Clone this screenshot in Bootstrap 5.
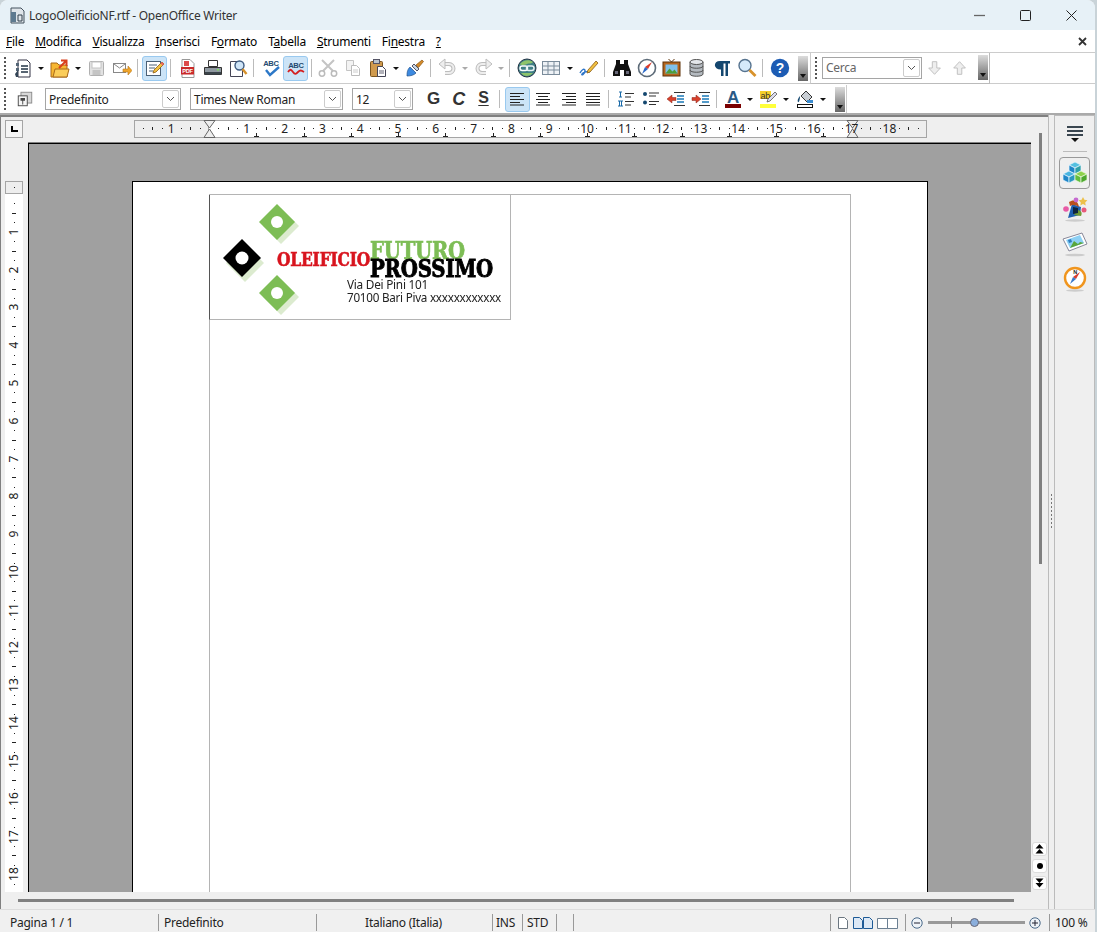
<!DOCTYPE html>
<html lang="it">
<head>
<meta charset="UTF-8">
<title>LogoOleificioNF.rtf - OpenOffice Writer</title>
<link href="https://cdn.jsdelivr.net/npm/bootstrap@5.3.0/dist/css/bootstrap.min.css" rel="stylesheet">
<style>
html, body { height: 100%; }
body { margin: 0; background: #c9d3d8; overflow: hidden; font-family: "Noto Sans", "Open Sans", sans-serif; font-size: 12px; letter-spacing: -0.25px; color: #111; }
.app-win { width: 1095px; height: 932px; background: #f0f0f0; border-top-left-radius: 8px; border-top-right-radius: 8px; overflow: hidden; }
.title-bar { height: 30px; background: #e7f1f7; color: #333; padding: 1px 1px 0 10px; }
.title-bar .win-btn { width: 46px; height: 28px; }
.menu-bar { height: 23px; background: #fff; border-bottom: 1px solid #ccc; padding: 1px 0 0 6px; }
.menu-bar a { color: #000; text-decoration: none; margin-right: 11px; }
.tool-row { height: 31px; background: #fff; border-bottom: 1px solid #ccc; }
.tool-row.second { border-bottom: 2px solid #aaa; padding-top: 1px; }
.grip { width: 2px; height: 22px; margin: 0 4px 0 4px; flex: none; background-image: linear-gradient(#555 50%, transparent 50%); background-size: 2px 4px; }
.second > .grip { margin-right: 6px; }
.tool { width: 25px; height: 25px; padding: 0; border: 1px solid transparent; border-radius: 3px; display: flex; align-items: center; justify-content: center; color: #222; flex: none; }
.tool.on { background: #cce4f7; border-color: #99c9ef; }
.arrow-btn { width: 12px; height: 25px; flex: none; position: relative; }
.arrow-btn.thin { width: 10px; }
.arrow-btn::after { content: ""; position: absolute; left: 50%; top: 11px; margin-left: -3px; border: 3px solid transparent; border-top: 3px solid #111; border-bottom: 0; }
.arrow-btn.off::after { border-top-color: #aaa; }
.sep { width: 8px; flex: none; height: 22px; position: relative; }
.sep.narrow { width: 7px; }
.sep.wide { width: 9px; }
.sep::after { content: ""; position: absolute; left: 3px; top: 2px; width: 1px; height: 18px; background: #bbb; }
.bar-end { width: 10px; height: 25px; flex: none; margin-left: 6px; background: linear-gradient(#dcdcdc, #666); position: relative; }
.bar-end::after { content: ""; position: absolute; left: 2px; bottom: 3px; border: 3px solid transparent; border-top: 4px solid #111; border-bottom: 0; }
.row-cap { width: 1px; height: 100%; background: #ccc; margin-left: 1px; flex: none; }
.find-box { border-left: 1px solid #ccc; border-right: 1px solid #bbb; border-bottom: 1px solid #bbb; height: 31px; margin-left: 2px; width: 180px; flex: none; }
.find-box .grip { margin: 0 5px 0 4px; }
.combo { height: 22px; border: 1px solid #a5a5a5; background: #fff; padding-left: 3px; color: #222; flex: none; }
.combo > span:first-child { padding-top: 1px; }
.combo .combo-btn { width: 17px; height: 18px; border: 1px solid #ccc; border-radius: 2px; margin: 1px; display: flex; align-items: center; justify-content: center; }
.combo-a { width: 136px; margin-left: 8px; }
.combo-b { width: 153px; margin-left: 9px; }
.combo-c { width: 61px; margin: 0 8px 0 9px; }
.combo-find { width: 100px; color: #666; }
.g-bold { font: 700 17px "Liberation Sans", sans-serif; color: #333; }
.c-ital { font: italic 700 18px "Liberation Sans", sans-serif; color: #333; }
.s-under { font: 700 16px "Liberation Sans", sans-serif; color: #333; text-decoration: underline; text-underline-offset: 2px; padding-bottom: 3px; }
.work-area { height: 794px; }
.left-pane { width: 1048px; }
.h-ruler-row { height: 28px; background: #efefef; border-top: 2px solid #808080; padding: 3px 0 0 5px; box-shadow: inset 1px 0 0 #808080; letter-spacing: 0; }
.corner-box { width: 18px; height: 18px; border: 1px solid #a5a5a5; background: #f5f5f5; position: relative; flex: none; }
.corner-box::after { content: ""; position: absolute; left: 5px; top: 5px; width: 7px; height: 6px; border-left: 2px solid #000; border-bottom: 2px solid #000; }
.h-ruler { position: relative; width: 793px; height: 18px; margin-left: 111px; background: #fff; border: 1px solid #a5a5a5; border-width: 1px 0; }
.rule-gray { position: absolute; top: -1px; height: 18px; background: #eee; border: 1px solid #a5a5a5; }
.rule-num { position: absolute; font-size: 12px; line-height: 14px; color: #222; }
.rule-dot { position: absolute; background: #222; }
.v-ruler { position: relative; width: 18px; height: 711px; margin: 38px 0 0 5px; background: #fff; letter-spacing: 0; }
.v-ruler .rule-gray { top: 0; left: 0; width: 18px; height: 13px; }
.v-rule-num { position: absolute; left: 0; width: 18px; text-align: center; line-height: 14px; transform: rotate(-90deg); color: #222; }
.v-pane { width: 28px; height: 749px; background: #efefef; flex: none; box-shadow: inset 1px 0 0 #808080; }
.doc-area { width: 1003px; height: 749px; background: #a0a0a0; border-left: 1px solid #000; border-top: 1px solid #000; box-shadow: 0 -1px 0 #808080; padding: 37px 0 0 103px; overflow: hidden; }
.page-sheet { width: 796px; height: 1123px; background: #fff; border: 1px solid #000; padding: 12px 76px 0; flex: none; }
.text-frame { height: 1000px; border: 1px solid #b4b4b4; }
.logo-pic { display: block; width: 302px; height: 125px; border-left: 1px solid #555; border-right: 1px solid #b4b4b4; border-bottom: 1px solid #b4b4b4; margin: 0 0 0 -1px; background: #fff; }
.logo-pic .blurred { filter: blur(0.45px); }
.v-scroll { width: 17px; background: #efefef; border-top: 2px solid #808080; position: relative; }
.v-thumb { width: 3px; height: 431px; background: #808080; margin: 16px 0 0 8px; }
.nav-btns { margin: auto 0 2px 1px; gap: 3px; }
.nav-btn { width: 15px; height: 14px; background: #fff; border: 1px solid #ddd; border-radius: 3px; display: flex; align-items: center; justify-content: center; }
.h-scroll { height: 17px; background: #efefef; padding-left: 18px; box-shadow: inset 1px 0 0 #808080; }
.h-thumb { width: 996px; height: 3px; background: #808080; }
.handle-col { width: 7px; background: #efefef; border-left: 1px solid #bbb; border-right: 1px solid #bbb; height: 794px; flex: none; }
.handle-dots { width: 1px; height: 36px; margin-left: 2px; background-image: linear-gradient(#777 50%, transparent 50%); background-size: 1px 4px; }
.side-bar { width: 40px; background: #efefef; border: 1px solid #bbb; border-bottom: 0; border-left: 0; padding-top: 8px; }
.side-rule { width: 24px; height: 1px; background: #bbb; margin: 7px 0 5px; }
.side-item { width: 31px; height: 32px; border: 1px solid transparent; border-radius: 4px; margin-bottom: 3px; display: flex; align-items: center; justify-content: center; flex: none; }
.side-item.on { border-color: #999; margin-bottom: 4px; }
.status-bar { height: 23px; background: #f0f0f0; border-top: 1px solid #ddd; padding-top: 4px; }
.status-cell { height: 17px; line-height: 17px; border-right: 1px solid #999; padding-left: 5px; flex: none; white-space: nowrap; color: #222; }
.zoom-track { width: 97px; height: 3px; background: #999; position: relative; margin: 0 4px 0 5px; flex: none; }
.zoom-track::before { content: ""; position: absolute; left: 23px; top: -4px; width: 1px; height: 11px; background: #888; }
.zoom-knob { position: absolute; left: 42px; top: -3px; width: 9px; height: 9px; border-radius: 50%; background: #8aaedc; border: 1px solid #667; }
</style>
</head>
<body>
<svg width="0" height="0" class="position-absolute">
<defs>
<symbol id="i-new" viewBox="0 0 20 20"><path d="M5 2h9l3 3v14H5z" fill="#fff" stroke="#334"/><path d="M3 5h3v3H3zM3 10h3v3H3z" fill="#567"/><path d="M8 8h7M8 11h7M8 14h7" stroke="#234" stroke-width="1.4"/><path d="M2 16l3-4v7H3z" fill="#345"/></symbol>
<symbol id="i-open" viewBox="0 0 20 20"><path d="M1 5h6l2 2h8v12H1z" fill="#f7b733" stroke="#a8681a"/><path d="M3 19l2-8h14l-2 8z" fill="#fbcd5a" stroke="#a8681a"/><path d="M9 10l7-7M11 2.500h5.500V8" fill="none" stroke="#d9401c" stroke-width="2"/></symbol>
<symbol id="i-save" viewBox="0 0 20 20"><rect x="2.500" y="3.500" width="14" height="14" rx="1" fill="#e2e2e2" stroke="#b0b0b0"/><rect x="5" y="4" width="9" height="6" fill="#fff" stroke="#c4c4c4"/><rect x="5.500" y="12" width="8" height="5" fill="#c4c4c4"/></symbol>
<symbol id="i-mail" viewBox="0 0 20 20"><rect x="1.500" y="5.500" width="12" height="9" fill="#fff" stroke="#888"/><path d="M2 6l5.500 4L13 6" fill="none" stroke="#888"/><path d="M11 11h5V8l4 4.500-4 4.500v-3h-5z" fill="#f0a52b" stroke="#b9771a" stroke-width=".6"/></symbol>
<symbol id="i-edit" viewBox="0 0 20 20"><rect x="1.500" y="3.500" width="14" height="14" fill="#fff" stroke="#4a6076"/><path d="M4 7h8M4 10h6M4 13h4" stroke="#4a6076"/><path d="M8 15l1-3 8-8 2 2-8 8z" fill="#f4c23f" stroke="#8c5b14" stroke-width=".8"/><path d="M15.500 5.500l2 2 1.500-1.500-2-2z" fill="#e66"/></symbol>
<symbol id="i-pdf" viewBox="0 0 20 20"><path d="M4 1.500h8l4 4v14H4z" fill="#fff" stroke="#999"/><rect x="3" y="9" width="13" height="7.500" fill="#c92a2a"/><path d="M6 3h5v5H6z" fill="#dd4a4a"/><text x="9.500" y="15" font-family="Liberation Sans" font-size="5.600" font-weight="700" fill="#fff" text-anchor="middle">PDF</text></symbol>
<symbol id="i-print" viewBox="0 0 20 20"><path d="M5.500 2.500h9v6h-9z" fill="#fff" stroke="#333"/><path d="M1.500 9.500h17v7h-17z" fill="#8f98a0" stroke="#333"/><path d="M2 14h16v2.500H2z" fill="#3a434a"/><path d="M14 11h2v1.500h-2z" fill="#7fe05f"/></symbol>
<symbol id="i-prev" viewBox="0 0 20 20"><path d="M2.500 3.500h9l3 3v12h-12z" fill="#fff" stroke="#445"/><circle cx="11.500" cy="7.500" r="4.500" fill="#cfe5f8" stroke="#3d5a80" stroke-width="1.400"/><path d="M14.500 11l4 5" stroke="#d8922b" stroke-width="2.400"/></symbol>
<symbol id="i-spell" viewBox="0 0 20 20"><text x="10" y="8" font-family="Liberation Sans" font-size="7.600" font-weight="700" fill="#244a70" text-anchor="middle">ABC</text><path d="M5 12l4 5 9-8" fill="none" stroke="#2d78c8" stroke-width="2.400"/></symbol>
<symbol id="i-auto" viewBox="0 0 20 20"><text x="10" y="10" font-family="Liberation Sans" font-size="7.600" font-weight="700" fill="#244a70" text-anchor="middle">ABC</text><path d="M2 14c2-3 3-3 5 0s3 2 5 0 3-2 6 0" fill="none" stroke="#d42020" stroke-width="1.800"/></symbol>
<symbol id="i-cut" viewBox="0 0 20 20"><path d="M4 2l11 11M16 2L5 13" stroke="#c4c4c4" stroke-width="2"/><circle cx="4" cy="15.500" r="2.700" fill="none" stroke="#bbb" stroke-width="1.500"/><circle cx="16" cy="15.500" r="2.700" fill="none" stroke="#bbb" stroke-width="1.500"/></symbol>
<symbol id="i-copy" viewBox="0 0 20 20"><path d="M3.500 2.500h7v10h-7z" fill="#f3f3f3" stroke="#c4c4c4"/><path d="M8.500 7.500h5l3 3v7h-8z" fill="#fff" stroke="#bbb"/><path d="M10 12h5M10 14h5" stroke="#ccc"/></symbol>
<symbol id="i-paste" viewBox="0 0 20 20"><rect x="2.500" y="3.500" width="12" height="15" rx="1" fill="#cf9a4e" stroke="#7a5520"/><rect x="5.500" y="1.500" width="6" height="4" fill="#b9c3cc" stroke="#556"/><path d="M9.500 8.500h5l3 3v7h-8z" fill="#fff" stroke="#445"/><path d="M11 13h5M11 15h5" stroke="#667"/></symbol>
<symbol id="i-brush" viewBox="0 0 20 20"><path d="M2 18c0-5 1-7 3-9l6 6c-2 2-5 3-9 3z" fill="#3d8ae0" stroke="#1d4f8a" stroke-width=".7"/><path d="M7 8l2-2 5 5-2 2z" fill="#c9d6e2" stroke="#556"/><path d="M11 7l6-5 1.500 1.500-5 6z" fill="#d38a2a" stroke="#8a5512" stroke-width=".7"/></symbol>
<symbol id="i-undo" viewBox="0 0 20 20"><path d="M6 6h6a4.500 4.500 0 0 1 0 9H8" fill="none" stroke="#bdbdbd" stroke-width="4"/><path d="M6 6h6a4.500 4.500 0 0 1 0 9H8" fill="none" stroke="#eee" stroke-width="2"/><path d="M8 1v10L2 6z" fill="#eee" stroke="#bdbdbd"/></symbol>
<symbol id="i-redo" viewBox="0 0 20 20"><path d="M14 6H8a4.500 4.500 0 0 0 0 9h4" fill="none" stroke="#bdbdbd" stroke-width="4"/><path d="M14 6H8a4.500 4.500 0 0 0 0 9h4" fill="none" stroke="#eee" stroke-width="2"/><path d="M12 1v10l6-5z" fill="#eee" stroke="#bdbdbd"/></symbol>
<symbol id="i-globe" viewBox="0 0 20 20"><circle cx="10" cy="10" r="9" fill="#3f7f86" stroke="#234"/><path d="M3 6c3-4 9-5 13-2-1 2-4 1-6 2S4 8 3 6zM4 15c3 4 8 4 12 0z" fill="#8ec46a"/><rect x="3" y="8" width="7.500" height="4.500" rx="2.200" fill="none" stroke="#fff" stroke-width="1.500"/><rect x="9.500" y="8" width="7.500" height="4.500" rx="2.200" fill="none" stroke="#e8f2f5" stroke-width="1.500"/></symbol>
<symbol id="i-table" viewBox="0 0 20 20"><rect x=".5" y="3.500" width="17" height="13" fill="#eef2f6" stroke="#7a8b9a"/><path d="M6 3.500v13M12 3.500v13M.5 8h17M.5 12h17" stroke="#7a8b9a"/></symbol>
<symbol id="i-draw" viewBox="0 0 20 20"><path d="M1 15c2-4 5-5 5-2s-4 5-3 3 6-3 8-2" fill="none" stroke="#2f76c9" stroke-width="1.500"/><path d="M9 12L17 3l2 2-8 9-3 1z" fill="#f1c040" stroke="#8a5b14" stroke-width=".8"/></symbol>
<symbol id="i-binoc" viewBox="0 0 20 20"><path d="M4 2h4v4h4V2h4v4l3 8v4h-7v-6H8v6H1v-4l3-8z" fill="#111"/><path d="M3 13h3v3H3zM14 13h3v3h-3z" fill="#667"/></symbol>
<symbol id="i-comp" viewBox="0 0 20 20"><circle cx="10" cy="10" r="8.500" fill="#fff" stroke="#5d6b78" stroke-width="1.600"/><path d="M15 4l-4 7-3-2z" fill="#d93a2b"/><path d="M5 16l3-7 3 2z" fill="#2a68c8"/></symbol>
<symbol id="i-gal" viewBox="0 0 20 20"><rect x="1" y="4" width="17" height="14" fill="#b5651d" stroke="#5e3209"/><rect x="3.500" y="6.500" width="12" height="9" fill="#7fc0ea"/><path d="M3.500 15.500l4-5 3 3 2-2 3 4z" fill="#4c9e3c"/><path d="M9.500 4l-3-3M9.500 4l3-3" stroke="#5e3209"/></symbol>
<symbol id="i-db" viewBox="0 0 20 20"><path d="M3 4v12c0 3 13 3 13 0V4z" fill="#b4bac0" stroke="#555"/><ellipse cx="9.500" cy="4" rx="6.500" ry="2.500" fill="#e3e6ea" stroke="#555"/><path d="M3 8c0 3 13 3 13 0M3 12c0 3 13 3 13 0" fill="none" stroke="#555"/></symbol>
<symbol id="i-pil" viewBox="0 0 20 20"><path d="M8 3h10v2.500h-2V18h-2.500V5.500h-2V18H9v-6.500c-8 0-8-8.500-1-8.500z" fill="#14476f"/></symbol>
<symbol id="i-find" viewBox="0 0 20 20"><circle cx="8" cy="7.500" r="6" fill="#d5e9fa" stroke="#56738f" stroke-width="1.400"/><path d="M12.500 12l6 6" stroke="#d8922b" stroke-width="2.800"/></symbol>
<symbol id="i-help" viewBox="0 0 20 20"><circle cx="10" cy="10" r="9.200" fill="#1d5cb4"/><text x="10" y="15" font-family="Liberation Sans" font-size="14" font-weight="700" fill="#fff" text-anchor="middle">?</text></symbol>
<symbol id="i-down" viewBox="0 0 20 20"><path d="M7 3h5v7h4l-6.500 7L3 10h4z" fill="#eee" stroke="#bbb"/></symbol>
<symbol id="i-up" viewBox="0 0 20 20"><path d="M7 17h5v-7h4L9.500 3 3 10h4z" fill="#eee" stroke="#bbb"/></symbol>
<symbol id="i-styles" viewBox="0 0 20 20"><rect x="5.500" y="2.500" width="12" height="12" fill="#d8d8d8" stroke="#888"/><rect x="2.500" y="6.500" width="10" height="11" fill="#f4f4f4" stroke="#444"/><path d="M5 9h5v3H8v4H7v-4H5z" fill="#444"/></symbol>
<symbol id="i-left" viewBox="0 0 20 20"><path d="M2 4.500h14M2 7.500h10M2 10.500h14M2 13.500h10M2 16h14" stroke="#222"/></symbol>
<symbol id="i-center" viewBox="0 0 20 20"><path d="M3 4.500h14M5 7.500h10M3 10.500h14M5 13.500h10M3 16h14" stroke="#222"/></symbol>
<symbol id="i-right" viewBox="0 0 20 20"><path d="M4 4.500h14M8 7.500h10M4 10.500h14M8 13.500h10M4 16h14" stroke="#222"/></symbol>
<symbol id="i-just" viewBox="0 0 20 20"><path d="M3 4.500h14M3 7.500h14M3 10.500h14M3 13.500h14M3 16h14" stroke="#222"/></symbol>
<symbol id="i-num" viewBox="0 0 20 20"><path d="M3 3h3M4.500 3v5M3 8h3M2 12h5M3.500 12v5M5.500 12v5M2 17h5" stroke="#1b6aa8"/><path d="M9 4.500h9M9 8h6M9 12.500h9M9 16h6" stroke="#333" stroke-width="1.200"/></symbol>
<symbol id="i-bul" viewBox="0 0 20 20"><circle cx="4" cy="5" r="2" fill="#14476f"/><circle cx="4" cy="13.500" r="2" fill="#14476f"/><path d="M8 4h10M8 7h7M8 12.500h10M8 15.500h7" stroke="#333" stroke-width="1.200"/></symbol>
<symbol id="i-indl" viewBox="0 0 20 20"><path d="M1 10l5-4v2.500h4v3H6V14z" fill="#d8402c" stroke="#8a2216" stroke-width=".5"/><path d="M11 7h7M11 10h7M11 13h7" stroke="#1b79b8" stroke-width="1.400"/><path d="M8 3.500h11M8 16.500h11" stroke="#333"/></symbol>
<symbol id="i-indr" viewBox="0 0 20 20"><path d="M10 10L5 6v2.500H1v3h4V14z" fill="#d8402c" stroke="#8a2216" stroke-width=".5"/><path d="M11 7h7M11 10h7M11 13h7" stroke="#1b79b8" stroke-width="1.400"/><path d="M8 3.500h11M8 16.500h11" stroke="#333"/></symbol>
<symbol id="i-color" viewBox="0 0 20 20"><text x="10" y="14" font-family="Liberation Sans" font-size="17" font-weight="700" fill="#2a5a86" text-anchor="middle">A</text><rect x="2" y="15" width="16" height="4" fill="#7a0000"/></symbol>
<symbol id="i-hilite" viewBox="0 0 20 20"><rect x="2" y="2" width="11" height="8" fill="#f4d02a"/><text x="2.500" y="10" font-family="Liberation Sans" font-size="9" fill="#333">ab</text><path d="M9 13l1-3 7-7 2 2-7 7z" fill="#dde" stroke="#555" stroke-width=".8"/><rect x="2" y="15" width="16" height="4" fill="#ffff3a"/></symbol>
<symbol id="i-bg" viewBox="0 0 20 20"><path d="M6 7l5-5 6 6-5 5z" fill="#c9ced4" stroke="#333"/><path d="M5 7c-2 2-3 5-2 6s2-3 2-6z" fill="#14476f"/><path d="M12 11h6v3h-6z" fill="#3a8cd0"/><rect x="2.500" y="15.500" width="15" height="3" fill="#fff" stroke="#111"/></symbol>
<symbol id="i-cube" viewBox="0 0 26 26"><path d="M13 2l6 3-6 3-6-3z" fill="#55c0e0" stroke="#eaf6ff" stroke-width=".7"/><path d="M7 5l6 3v6l-6-3z" fill="#1f86c8" stroke="#eaf6ff" stroke-width=".7"/><path d="M19 5l-6 3v6l6-3z" fill="#2fa0a8" stroke="#eaf6ff" stroke-width=".7"/><path d="M7 11l6 3-6 3-6-3z" fill="#48b4e0" stroke="#eaf6ff" stroke-width=".7"/><path d="M1 14l6 3v6l-6-3z" fill="#1f86c8" stroke="#eaf6ff" stroke-width=".7"/><path d="M13 14l-6 3v6l6-3z" fill="#2a98c0" stroke="#eaf6ff" stroke-width=".7"/><path d="M19 11l6 3-6 3-6-3z" fill="#8ed24c" stroke="#f0fbe6" stroke-width=".7"/><path d="M13 14l6 3v6l-6-3z" fill="#63bd3d" stroke="#f0fbe6" stroke-width=".7"/><path d="M25 14l-6 3v6l6-3z" fill="#4da82e" stroke="#f0fbe6" stroke-width=".7"/></symbol>
<symbol id="i-shapes" viewBox="0 0 26 26"><path d="M10 8l9 3-1 8-12 3z" fill="#1d5fb0"/><path d="M7 6c4-3 9-2 10 5-3-2-6-3-9-1z" fill="#b8501f"/><path d="M15 14c3 0 6 2 4 6l-7-1z" fill="#6f9a34"/><path d="M11 11l5 1v5l-5 1z" fill="#0e2440"/><circle cx="14" cy="4" r="2.400" fill="#c66ad0"/><path d="M21 1l1.400 2.800 3 .5-2.200 2.100.5 3-2.700-1.400-2.700 1.400.5-3-2.200-2.100 3-.5z" fill="#ecc04a"/><circle cx="4" cy="13" r="2.800" fill="#e85aa5"/><circle cx="22" cy="14" r="2.500" fill="#e85a7a"/><ellipse cx="13" cy="24.500" rx="10" ry="1.200" fill="#ccc"/></symbol>
<symbol id="i-pics" viewBox="0 0 26 26"><path d="M1 8l19-6 5 11-18 7z" fill="#fff" stroke="#889"/><path d="M4 9l14-5 4 8-14 5z" fill="#8dd0f4"/><path d="M8 17l4-7 4 3 2-2 4 1z" fill="#5aa63c"/><path d="M6 9l3-1 1 3-3 1z" fill="#2c7cc0"/><ellipse cx="13" cy="24" rx="10" ry="1.300" fill="#ccc"/></symbol>
<symbol id="i-nav" viewBox="0 0 26 26"><circle cx="13" cy="12" r="10" fill="#fff" stroke="#f0951e" stroke-width="2.400"/><path d="M18 6l-4 7-3-2z" fill="#d93a2b"/><path d="M8 18l3-7 3 2z" fill="#3a78c8"/><text x="13" y="7.500" font-family="Liberation Sans" font-size="5.500" font-weight="700" fill="#222" text-anchor="middle">N</text><ellipse cx="13" cy="24.500" rx="9" ry="1.200" fill="#ccc"/></symbol>
</defs>
</svg>

<div class="app-win d-flex flex-column">
  <div class="title-bar d-flex align-items-center">
    <svg width="15" height="17" viewBox="0 0 15 17" class="me-1"><path d="M1 1h10l3 3v12H1z" fill="#dfe5ea" stroke="#44525e"/><rect x="1" y="5" width="5" height="10" fill="#5e7a90"/><path d="M8 8h4v6H8z" fill="none" stroke="#33414d"/></svg>
    <span class="flex-grow-1">LogoOleificioNF.rtf - OpenOffice Writer</span>
    <div class="win-btn d-flex align-items-center justify-content-center"><svg width="11" height="11"><path d="M0 5.500h11" stroke="#666" stroke-width="1.300"/></svg></div>
    <div class="win-btn d-flex align-items-center justify-content-center"><svg width="11" height="11"><rect x=".5" y=".5" width="10" height="10" rx="1" fill="none" stroke="#222"/></svg></div>
    <div class="win-btn d-flex align-items-center justify-content-center"><svg width="11" height="11"><path d="M.5.500l10 10M10.500.500l-10 10" stroke="#222"/></svg></div>
  </div>

  <div class="menu-bar d-flex align-items-center">
    <a href="#"><u>F</u>ile</a><a href="#"><u>M</u>odifica</a><a href="#"><u>V</u>isualizza</a><a href="#"><u>I</u>nserisci</a><a href="#">F<u>o</u>rmato</a><a href="#">T<u>a</u>bella</a><a href="#"><u>S</u>trumenti</a><a href="#">Fi<u>n</u>estra</a><a href="#"><u>?</u></a>
    <svg width="9" height="9" class="ms-auto" style="margin-right:8px"><path d="M1 1l7 7M8 1L1 8" stroke="#333" stroke-width="1.800"/></svg>
  </div>

  <div class="tool-row d-flex align-items-center">
    <span class="grip"></span>
    <span class="tool"><svg width="20" height="20"><use href="#i-new"/></svg></span><span class="arrow-btn"></span>
    <span class="tool"><svg width="20" height="20"><use href="#i-open"/></svg></span><span class="arrow-btn"></span>
    <span class="tool"><svg width="20" height="20"><use href="#i-save"/></svg></span>
    <span class="tool"><svg width="20" height="20"><use href="#i-mail"/></svg></span>
    <span class="sep"></span>
    <span class="tool on"><svg width="20" height="20"><use href="#i-edit"/></svg></span>
    <span class="sep"></span>
    <span class="tool"><svg width="20" height="20"><use href="#i-pdf"/></svg></span>
    <span class="tool"><svg width="20" height="20"><use href="#i-print"/></svg></span>
    <span class="tool"><svg width="20" height="20"><use href="#i-prev"/></svg></span>
    <span class="sep"></span>
    <span class="tool"><svg width="20" height="20"><use href="#i-spell"/></svg></span>
    <span class="tool on"><svg width="20" height="20"><use href="#i-auto"/></svg></span>
    <span class="sep narrow"></span>
    <span class="tool"><svg width="20" height="20"><use href="#i-cut"/></svg></span>
    <span class="tool"><svg width="20" height="20"><use href="#i-copy"/></svg></span>
    <span class="tool"><svg width="20" height="20"><use href="#i-paste"/></svg></span><span class="arrow-btn"></span>
    <span class="tool"><svg width="20" height="20"><use href="#i-brush"/></svg></span>
    <span class="sep narrow"></span>
    <span class="tool"><svg width="20" height="20"><use href="#i-undo"/></svg></span><span class="arrow-btn off"></span>
    <span class="tool"><svg width="20" height="20"><use href="#i-redo"/></svg></span><span class="arrow-btn thin off"></span>
    <span class="sep"></span>
    <span class="tool"><svg width="20" height="20"><use href="#i-globe"/></svg></span>
    <span class="tool"><svg width="20" height="20"><use href="#i-table"/></svg></span><span class="arrow-btn"></span>
    <span class="tool"><svg width="20" height="20"><use href="#i-draw"/></svg></span>
    <span class="sep"></span>
    <span class="tool"><svg width="20" height="20"><use href="#i-binoc"/></svg></span>
    <span class="tool"><svg width="20" height="20"><use href="#i-comp"/></svg></span>
    <span class="tool"><svg width="20" height="20"><use href="#i-gal"/></svg></span>
    <span class="tool"><svg width="20" height="20"><use href="#i-db"/></svg></span>
    <span class="tool"><svg width="20" height="20"><use href="#i-pil"/></svg></span>
    <span class="tool"><svg width="20" height="20"><use href="#i-find"/></svg></span>
    <span class="sep"></span>
    <span class="tool"><svg width="20" height="20"><use href="#i-help"/></svg></span>
    <span class="bar-end"></span>
    <div class="find-box d-flex align-items-center">
      <span class="grip"></span>
      <div class="combo combo-find d-flex align-items-center justify-content-between"><span>Cerca</span><span class="combo-btn"><svg width="9" height="6"><path d="M1 1l3.500 3.500L8 1" fill="none" stroke="#555"/></svg></span></div>
      <span class="tool"><svg width="18" height="18"><use href="#i-down"/></svg></span>
      <span class="tool"><svg width="18" height="18"><use href="#i-up"/></svg></span>
      <span class="bar-end"></span>
    </div>
  </div>

  <div class="tool-row second d-flex align-items-center">
    <span class="grip"></span>
    <span class="tool"><svg width="18" height="18"><use href="#i-styles"/></svg></span>
    <div class="combo combo-a d-flex align-items-center justify-content-between"><span>Predefinito</span><span class="combo-btn"><svg width="9" height="6"><path d="M1 1l3.500 3.500L8 1" fill="none" stroke="#555"/></svg></span></div>
    <div class="combo combo-b d-flex align-items-center justify-content-between"><span>Times New Roman</span><span class="combo-btn"><svg width="9" height="6"><path d="M1 1l3.500 3.500L8 1" fill="none" stroke="#555"/></svg></span></div>
    <div class="combo combo-c d-flex align-items-center justify-content-between"><span>12</span><span class="combo-btn"><svg width="9" height="6"><path d="M1 1l3.500 3.500L8 1" fill="none" stroke="#555"/></svg></span></div>
    <span class="tool g-bold">G</span>
    <span class="tool c-ital">C</span>
    <span class="tool s-under">S</span>
    <span class="sep wide"></span>
    <span class="tool on"><svg width="20" height="20"><use href="#i-left"/></svg></span>
    <span class="tool"><svg width="20" height="20"><use href="#i-center"/></svg></span>
    <span class="tool"><svg width="20" height="20"><use href="#i-right"/></svg></span>
    <span class="tool"><svg width="20" height="20"><use href="#i-just"/></svg></span>
    <span class="sep"></span>
    <span class="tool"><svg width="20" height="20"><use href="#i-num"/></svg></span>
    <span class="tool"><svg width="20" height="20"><use href="#i-bul"/></svg></span>
    <span class="tool"><svg width="20" height="20"><use href="#i-indl"/></svg></span>
    <span class="tool"><svg width="20" height="20"><use href="#i-indr"/></svg></span>
    <span class="sep narrow"></span>
    <span class="tool"><svg width="20" height="20"><use href="#i-color"/></svg></span><span class="arrow-btn thin"></span>
    <span class="tool"><svg width="20" height="20"><use href="#i-hilite"/></svg></span><span class="arrow-btn"></span>
    <span class="tool"><svg width="20" height="20"><use href="#i-bg"/></svg></span><span class="arrow-btn"></span>
    <span class="bar-end"></span>
    <span class="row-cap"></span>
  </div>

  <div class="work-area d-flex">
    <div class="left-pane d-flex flex-column">
      <div class="d-flex">
        <div class="d-flex flex-column" style="width:1031px">
          <div class="h-ruler-row d-flex"><span class="corner-box"></span><div class="h-ruler" id="hRuler"></div></div>
          <div class="d-flex">
            <div class="v-pane"><div class="v-ruler" id="vRuler"></div></div>
            <div class="doc-area">
              <div class="page-sheet">
                <div class="text-frame">
                  <svg class="logo-pic" viewBox="0 0 300 124">
                    <g class="blurred" transform="translate(-210 -195)">
                      <g fill="#dcebcf"><path d="M281 208l18 18-18 18-18-18z"/><path d="M245 244l19 19-19 19-19-19z"/><path d="M281 279l18 18-18 18-18-18z"/></g>
                      <path d="M277 204l18 18-18 18-18-18z" fill="#7dbd55"/>
                      <path d="M242 239l19 19-19 19-19-19z" fill="#000"/>
                      <path d="M277 275l18 18-18 18-18-18z" fill="#7dbd55"/>
                      <circle cx="277" cy="222" r="6" fill="#fff"/><circle cx="242" cy="258" r="6.500" fill="#fff"/><circle cx="277" cy="293" r="6" fill="#fff"/>
                      <text x="370" y="259" font-family="DejaVu Serif" font-weight="700" font-size="24" fill="#7dbd55" stroke="#7dbd55" stroke-width=".7" textLength="95" lengthAdjust="spacingAndGlyphs">FUTURO</text>
                      <text x="277" y="266" font-family="DejaVu Serif" font-weight="700" font-size="18" fill="#d8141e" stroke="#d8141e" stroke-width=".6" textLength="93" lengthAdjust="spacingAndGlyphs">OLEIFICIO</text>
                      <text x="370" y="277" font-family="DejaVu Serif" font-weight="700" font-size="24" fill="#000" stroke="#000" stroke-width=".9" textLength="123" lengthAdjust="spacingAndGlyphs">PROSSIMO</text>
                      <text x="347" y="289" font-family="Noto Sans" font-size="12" fill="#222" textLength="81" lengthAdjust="spacingAndGlyphs">Via Dei Pini 101</text>
                      <text x="347" y="302" font-family="Noto Sans" font-size="12" fill="#222" textLength="154" lengthAdjust="spacingAndGlyphs">70100 Bari Piva xxxxxxxxxxxx</text>
                    </g>
                  </svg>
                </div>
              </div>
            </div>
          </div>
        </div>
        <div class="v-scroll d-flex flex-column">
          <div class="v-thumb"></div>
          <div class="nav-btns d-flex flex-column">
            <span class="nav-btn"><svg width="9" height="10"><path d="M4.500 0l4 4.500H.500zM4.500 5l4 4.500H.500z" fill="#000"/></svg></span>
            <span class="nav-btn"><svg width="6" height="6"><circle cx="3" cy="3" r="3" fill="#000"/></svg></span>
            <span class="nav-btn"><svg width="9" height="10"><path d="M.500.500h8L4.500 5zM.500 5h8l-4 4.500z" fill="#000"/></svg></span>
          </div>
        </div>
      </div>
      <div class="h-scroll d-flex align-items-center"><div class="h-thumb"></div></div>
    </div>
    <div class="handle-col d-flex align-items-center"><div class="handle-dots"></div></div>
    <div class="side-bar d-flex flex-column align-items-center flex-grow-1">
      <svg width="20" height="20" viewBox="0 0 20 20"><path d="M2 3h16M2 7h16M2 11h16" stroke="#3a4650" stroke-width="1.800"/><path d="M6 14h8l-4 4z" fill="#111"/></svg>
      <span class="side-rule"></span>
      <span class="side-item on"><svg width="26" height="26"><use href="#i-cube"/></svg></span>
      <span class="side-item"><svg width="26" height="26"><use href="#i-shapes"/></svg></span>
      <span class="side-item"><svg width="26" height="26"><use href="#i-pics"/></svg></span>
      <span class="side-item"><svg width="26" height="26"><use href="#i-nav"/></svg></span>
    </div>
  </div>

  <div class="status-bar d-flex align-items-start">
    <div class="status-cell" style="width:159px;padding-left:10px">Pagina 1 / 1</div>
    <div class="status-cell" style="width:158px">Predefinito</div>
    <div class="status-cell text-center" style="width:176px;padding:0 2px 0 0">Italiano (Italia)</div>
    <div class="status-cell" style="width:30px;padding-left:3px">INS</div>
    <div class="status-cell" style="width:34px;padding-left:4px">STD</div>
    <div class="status-cell" style="width:17px"></div>
    <div class="status-cell" style="width:257px"></div>
    <div class="status-cell d-flex align-items-center gap-1" style="width:75px;padding-left:6px">
      <svg width="12" height="14" viewBox="0 0 12 14"><path d="M1.500 1.500h6l3 3v8h-9z" fill="#fff" stroke="#6b7680"/></svg>
      <svg width="20" height="14" viewBox="0 0 20 14"><path d="M.500 1.500h6l3 3v8h-9zM10.500 1.500h6l3 3v8h-9z" fill="#dce8f5" stroke="#1d5a96"/></svg>
      <svg width="22" height="14" viewBox="0 0 22 14"><path d="M.500 2.500h10v10H.500zM10.500 2.500h10v10h-10z" fill="#fff" stroke="#6b7f92"/></svg>
    </div>
    <div class="status-cell d-flex align-items-center" style="width:144px">
      <svg width="12" height="12" viewBox="0 0 12 12" class="flex-shrink-0"><circle cx="6" cy="6" r="5.200" fill="#eef3f8" stroke="#4a6a8a"/><path d="M3 6h6" stroke="#223"/></svg>
      <span class="zoom-track"><span class="zoom-knob"></span></span>
      <svg width="12" height="12" viewBox="0 0 12 12" class="flex-shrink-0"><circle cx="6" cy="6" r="5.200" fill="#eef3f8" stroke="#4a6a8a"/><path d="M3 6h6M6 3v6" stroke="#223"/></svg>
    </div>
    <div class="status-cell border-0">100 %</div>
  </div>
</div>

<script>
    // ruler marks, 1 cm = 37.8 px
    const CM = 37.8;
    const hRuler = document.getElementById('hRuler');
    const vRuler = document.getElementById('vRuler');

    function addEl(parent, cls, css, text) {
        const el = document.createElement('span');
        el.className = cls;
        el.style.cssText = css;
        if (text) el.textContent = text;
        parent.appendChild(el);
    }

    // horizontal: left end of the ruler box is x=134, text origin x=209
    const ox = 75;
    addEl(hRuler, 'rule-gray', `left:0;width:${ox}px`);
    addEl(hRuler, 'rule-gray', `left:${ox + 643}px;width:${793 - ox - 643}px`);
    for (let i = -2; i <= 19; i++) {
        const x = ox + i * CM;
        for (let t = 1; t < 4; t++) {
            const tx = x + t * CM / 4;
            if (tx < 2 || tx > 790) continue;
            addEl(hRuler, 'rule-dot', `left:${Math.round(tx)}px;top:${t === 2 ? 6 : 7}px;width:1px;height:${t === 2 ? 3 : 1}px`);
        }
    }
    // default tab stops
    for (let x = ox + 47.25; x < ox + 643; x += 47.25) {
        addEl(hRuler, 'rule-dot', `left:${Math.round(x)}px;top:12px;width:1px;height:4px`);
        addEl(hRuler, 'rule-dot', `left:${Math.round(x) - 2}px;top:15px;width:5px;height:1px`);
    }
    // indent markers
    [ox, ox + 643].forEach(x => {
        hRuler.insertAdjacentHTML('beforeend',
            `<svg class="position-absolute" style="left:${x - 6}px;top:-1px" width="13" height="18"><path d="M1 .5h11L6.500 8zM1 17.500h11L6.500 9z" fill="#eee" stroke="#666"/></svg>`);
    });
    // numbers go last so that they stay on top of the markers
    for (let i = -1; i <= 18; i++) {
        if (i === 0) continue;
        addEl(hRuler, 'rule-num text-center', `left:${ox + i * CM - 7}px;width:14px;top:1px`, String(Math.abs(i)));
    }

    // vertical: box starts at y=181, text origin y=194
    addEl(vRuler, 'rule-gray', '');
    addEl(vRuler, 'rule-dot', 'top:6px;left:9px;width:1px;height:1px');
    for (let i = 0; i <= 18; i++) {
        const y = 13 + i * CM;
        if (i > 0) addEl(vRuler, 'v-rule-num', `top:${y - 7}px`, String(i));
        for (let t = 1; t < 4; t++) {
            const ty = y + t * CM / 4;
            if (ty > 708) continue;
            addEl(vRuler, 'rule-dot', `top:${Math.round(ty)}px;left:${t === 2 ? 7 : 9}px;height:1px;width:${t === 2 ? 4 : 1}px`);
        }
    }
</script>
</body>
</html>
